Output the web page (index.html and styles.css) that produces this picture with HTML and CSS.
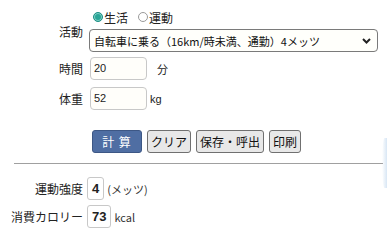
FILE: index.html
```html
<!DOCTYPE html>
<html lang="ja">
<head>
<meta charset="utf-8">
<link rel="stylesheet" href="styles.css">
</head>
<body>
<div class="page">
  <div class="row row-activity">
    <div class="label">活動</div>
    <div class="ctrl">
      <div class="radios">
        <label class="radio"><span class="dot checked"></span>生活</label>
        <label class="radio"><span class="dot"></span>運動</label>
      </div>
      <div class="select">
        <span class="select-text">自転車に乗る（16km/時未満、通勤）4メッツ</span>
        <svg class="chev" width="9" height="6" viewBox="0 0 9 6"><path d="M1 1 L4.5 4.5 L8 1" fill="none" stroke="#222" stroke-width="2"/></svg>
      </div>
    </div>
  </div>
  <div class="row row-field">
    <div class="label">時間</div>
    <div class="input">20</div>
    <span class="unit unit-min">分</span>
  </div>
  <div class="row row-field row-weight">
    <div class="label">体重</div>
    <div class="input">52</div>
    <span class="unit">kg</span>
  </div>
  <div class="buttons">
    <button class="btn btn-primary">計 算</button>
    <button class="btn">クリア</button>
    <button class="btn">保存・呼出</button>
    <button class="btn">印刷</button>
  </div>
  <hr class="divider">
  <div class="results">
    <div class="res-row">
      <div class="res-label">運動強度</div>
      <div class="res-box">4</div>
      <span class="res-unit">(メッツ)</span>
    </div>
    <div class="res-row res-row2">
      <div class="res-label">消費カロリー</div>
      <div class="res-box">73</div>
      <span class="res-unit">kcal</span>
    </div>
  </div>
</div>
<div class="edge"></div>
</body>
</html>
```

FILE: styles.css
```css
html, body {
  margin: 0;
  padding: 0;
  background: #ffffff;
}
body {
  font-family: "Liberation Sans", "Noto Sans CJK JP", sans-serif;
  font-size: 12px;
  color: #222;
  position: relative;
  width: 387px;
  height: 242px;
  overflow: hidden;
}
.page {
  padding-top: 10px;
}
.row {
  display: flex;
  align-items: center;
}
.label {
  width: 83px;
  text-align: right;
  flex: none;
  font-family: "Noto Sans CJK JP", sans-serif;
  font-size: 12px;
  line-height: 14px;
}
.row-activity .label {
  align-self: flex-start;
  margin-top: 15px;
}
.ctrl {
  margin-left: 6px;
  display: flex;
  flex-direction: column;
}
.radios {
  display: flex;
  height: 14px;
  align-items: center;
  margin-left: 4px;
  font-family: "Noto Sans CJK JP", sans-serif;
  font-size: 12px;
}
.radio {
  display: flex;
  align-items: center;
  margin-right: 10px;
}
.dot {
  width: 8px;
  height: 8px;
  border-radius: 50%;
  border: 1px solid #9a9a9a;
  background: #fff;
  margin-right: 1px;
  box-sizing: content-box;
}
.dot.checked {
  border-color: #1e8f84;
  background: #2aa597;
  box-shadow: inset 0 0 0 1px #7fd0c6;
}
.select {
  margin-top: 5px;
  width: 289px;
  height: 23px;
  box-sizing: border-box;
  border: 1px solid #7a7a7a;
  border-radius: 4px;
  background: #fffffb;
  display: flex;
  align-items: center;
  padding: 0 6px 0 4px;
}
.select-text {
  flex: 1;
  font-family: "Noto Sans CJK JP", sans-serif;
  font-size: 11px;
  white-space: nowrap;
  color: #111;
}
.chev {
  flex: none;
}
.row-field {
  margin-top: 5px;
}
.row-weight {
  margin-top: 7px;
}
.input {
  margin-left: 7px;
  width: 57px;
  height: 23px;
  box-sizing: border-box;
  border: 1px solid #c8c8c8;
  border-radius: 4px;
  background: #fffefa;
  font-size: 11px;
  line-height: 21px;
  padding-left: 3px;
}
.unit {
  margin-left: 3px;
  font-size: 11px;
}
.unit-min {
  margin-left: 10px;
  font-family: "Noto Sans CJK JP", sans-serif;
}
.buttons {
  display: flex;
  gap: 5px;
  margin-top: 20px;
  margin-left: 92px;
}
.btn {
  height: 23px;
  box-sizing: border-box;
  border: 1px solid #707070;
  border-radius: 3px;
  background: #e8e8e8;
  padding: 0 3px;
  font-family: "Noto Sans CJK JP", sans-serif;
  font-size: 12px;
  color: #111;
  line-height: 21px;
  margin: 0;
}
.btn-primary {
  width: 50px;
  background: #4f6ea3;
  border-color: #3d5785;
  color: #fff;
  letter-spacing: 1px;
}
.divider {
  margin: 10px 4px 0 14px;
  border: 0;
  height: 1px;
  background: #a0a0a0;
}
.results {
  margin-top: 13px;
}
.res-row {
  display: flex;
  align-items: center;
}
.res-row2 {
  margin-top: 5px;
}
.res-label {
  width: 83px;
  text-align: right;
  font-family: "Noto Sans CJK JP", sans-serif;
  font-size: 12px;
}
.res-box {
  margin-left: 4px;
  height: 23px;
  min-width: 17px;
  box-sizing: border-box;
  border: 1px solid #c8c8c8;
  border-radius: 3px;
  padding: 0 4px;
  font-weight: bold;
  font-size: 13px;
  line-height: 21px;
  text-align: center;
}
.res-unit {
  margin-left: 3px;
  font-family: "Noto Sans CJK JP", sans-serif;
  font-size: 11px;
  color: #333;
}
.edge {
  position: absolute;
  right: 0;
  top: 138px;
  width: 5px;
  height: 50px;
  background: linear-gradient(to right, rgba(220,232,245,0), rgba(200,220,240,0.7));
  border-radius: 50% 0 0 50%;
}
```
